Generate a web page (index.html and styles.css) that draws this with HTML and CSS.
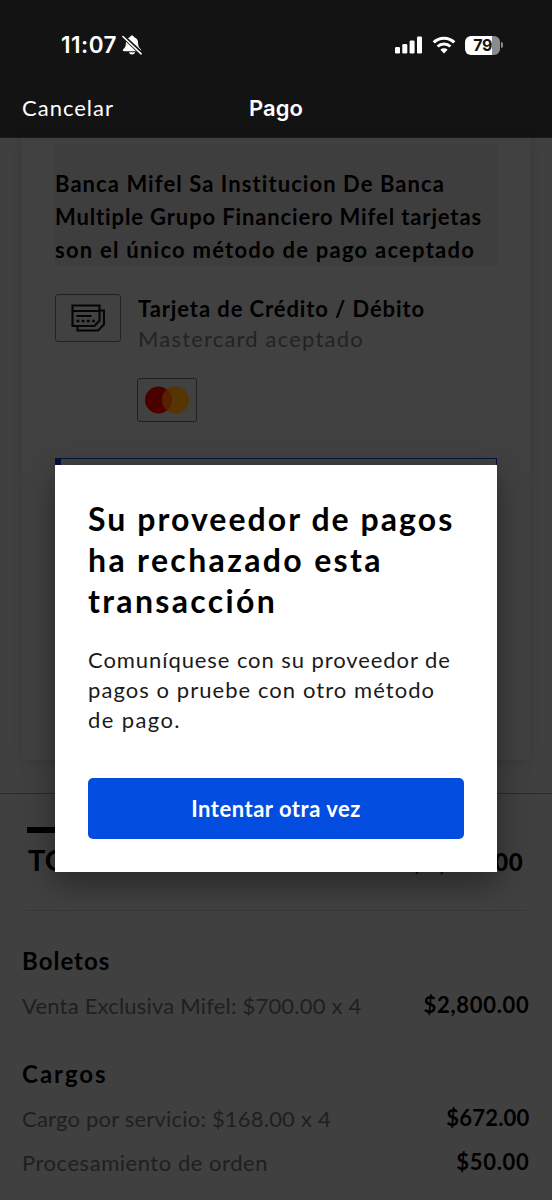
FILE: index.html
```
<!DOCTYPE html>
<html lang="es">
<head>
<meta charset="utf-8">
<title>Pago</title>
<link rel="stylesheet" href="styles.css">
</head>
<body>
<header class="top">
  <div class="status">
    <div class="clock">
      <span>11:07</span>
      <svg class="bell" width="20" height="20" viewBox="0 0 20 20">
        <path d="M10 .6c-.9 0-1.6.6-1.9 1.4C5.300 2.900 3.900 5.200 3.900 8c0 3.200-.7 4.500-2.200 5.800-.6.5-.9 1-.9 1.500 0 .6.500.9 1.100.9h16.200c.6 0 1.100-.3 1.100-.9 0-.5-.3-1-.9-1.500C16.800 12.500 16.100 11.200 16.100 8c0-2.800-1.400-5.100-4.200-6C11.600 1.200 10.900.6 10 .6zM7 17.300c.3 1.400 1.500 2.200 3 2.200s2.700-.8 3-2.200z" fill="#fff"/>
        <path d="M.4.700l19.800 18.600" stroke="#131313" stroke-width="4"/>
        <path d="M.9 1.500l18.200 17.300" stroke="#fff" stroke-width="1.600" stroke-linecap="round"/>
      </svg>
    </div>
    <div class="indicators">
      <svg width="28" height="18" viewBox="0 0 28 18" fill="#fff">
        <rect x="0" y="11" width="5" height="6.500" rx="1.300"/><rect x="7.300" y="8" width="5" height="9.500" rx="1.300"/><rect x="14.600" y="4.500" width="5" height="13" rx="1.300"/><rect x="22" y=".5" width="5" height="17" rx="1.300"/>
      </svg>
      <svg width="24" height="18" viewBox="0 0 24 18" fill="none" stroke="#fff" stroke-width="3">
        <path d="M1.700 6.400a14.700 14.700 0 0 1 20.600 0"/><path d="M5.600 10.500a9.200 9.200 0 0 1 12.800 0"/><path d="M12 17.400l-3.600-3.700a5.200 5.200 0 0 1 7.200 0z" fill="#fff" stroke="none"/>
      </svg>
      <div class="battery"><span>79</span></div>
      <i class="battery-tip"></i>
    </div>
  </div>
  <nav class="nav"><a class="cancel">Cancelar</a><h1>Pago</h1><span></span></nav>
</header>

<main class="page">
  <section class="panel">
    <div class="notice">
      <p class="n1">Banca Mifel Sa Institucion De Banca</p>
      <p class="n2">Multiple Grupo Financiero Mifel tarjetas</p>
      <p class="n3">son el único método de pago aceptado</p>
    </div>
    <div class="method">
      <div class="card-icon">
        <svg width="34" height="28" viewBox="0 0 34 28" fill="none" stroke="#050505" stroke-width="2.100">
          <path d="M1.500 1.500H28.500V16.500L23.500 22H1.500zM1.500 7H28.500M5.500 12H20.500"/>
          <path d="M28.500 6.500H33V20.500L27 26.500H6.500V22"/>
          <path d="M5.500 17H24" stroke-width="2.600" stroke-dasharray="2.800 2.400"/>
        </svg>
      </div>
      <div class="method-text">
        <h2>Tarjeta de Crédito / Débito</h2>
        <p>Mastercard aceptado</p>
        <div class="brand">
          <svg width="44" height="28" viewBox="0 0 44 28"><circle cx="13.500" cy="14" r="13.500" fill="#4b0000"/><circle cx="30.500" cy="14" r="13.500" fill="#573500"/><path d="M22 3.500a13.500 13.500 0 0 1 0 21a13.500 13.500 0 0 1 0-21z" fill="#582000"/></svg>
        </div>
      </div>
    </div>
    <div class="selected"></div>
  </section>

  <section class="summary">
    <div class="total-wrap">
      <div class="rule"></div>
      <div class="total"><span>TOTAL</span><b>$3,522.00</b></div>
    </div>
    <div class="group">
      <h3>Boletos</h3>
      <div class="row"><span class="r1">Venta Exclusiva Mifel: $700.00 x 4</span><b class="p1">$2,800.00</b></div>
    </div>
    <div class="group">
      <h3 class="charges">Cargos</h3>
      <div class="row"><span class="r2">Cargo por servicio: $168.00 x 4</span><b class="p2">$672.00</b></div>
      <div class="row"><span class="r3">Procesamiento de orden</span><b class="p1">$50.00</b></div>
    </div>
  </section>
</main>

<div class="modal" role="dialog">
  <h2><span class="t1">Su proveedor de pagos</span><br><span class="t2">ha rechazado esta</span><br><span class="t2">transacción</span></h2>
  <p><span class="m1">Comuníquese con su proveedor de</span><br><span class="m2">pagos o pruebe con otro método</span><br><span class="m3">de pago.</span></p>
  <button>Intentar otra vez</button>
</div>
</body>
</html>
```
FILE: styles.css
```
* { box-sizing: border-box; }
body, h1, h2, h3, p { margin: 0; }
body {
  position: relative;
  width: 552px;
  height: 1200px;
  overflow: hidden;
  background: #404040;
  color: #000;
  font: 22px/30px Lato, sans-serif;
  font-variant-ligatures: none;
}
svg { display: block; }

.top { height: 138px; background: #131313; color: #fff; border-bottom: 1px solid #1b1b1b; }
.status { display: flex; justify-content: space-between; align-items: center; height: 90px; padding: 0 49px 0 61px; }
.clock { display: flex; align-items: center; gap: 5px; font: 600 22.5px/30px Inter, sans-serif; letter-spacing: .5px; }
.indicators { display: flex; align-items: center; }
.indicators svg:first-child { margin-right: 9px; }
.battery {
  width: 35px; height: 19px; margin-left: 9px; border-radius: 6px;
  background: linear-gradient(90deg, #fff 27px, #8b8b8b 27px);
  color: #131313; font: 700 16px/19px Inter, sans-serif; text-align: center; letter-spacing: -.6px;
}
.battery-tip { width: 2px; height: 6px; margin-left: 1px; border-radius: 0 3px 3px 0; background: #8b8b8b; }
.nav { display: grid; grid-template-columns: 1fr auto 1fr; align-items: center; height: 36px; padding: 0 22px; }
.cancel { letter-spacing: 1px; }
.nav h1 { font: 600 22px/30px Inter, sans-serif; letter-spacing: .1px; }

.panel { height: 622px; margin: 0 22px; padding: 6px 33px 0; background: #414141; box-shadow: 0 0 12px rgba(0, 0, 0, .13); }
.notice { height: 122px; padding-top: 23px; background: #3e3e3e; font-weight: 700; line-height: 33px; white-space: nowrap; }
.n1 { letter-spacing: 1.07px; }
.n2 { letter-spacing: .87px; }
.n3 { letter-spacing: 1.24px; }
.method { display: flex; gap: 17px; padding-top: 28px; }
.card-icon { display: grid; place-items: center; width: 66px; height: 48px; border: 1.500px solid #222; border-radius: 3px; }
.method h2 { font-size: 22px; line-height: 30px; letter-spacing: .9px; }
.method p { color: #232323; letter-spacing: 1.19px; }
.brand { display: grid; place-items: center; width: 60px; height: 44px; margin-top: 24px; margin-left: -1px; border: 1px solid #202020; border-radius: 3px; }
.selected { width: 442px; height: 180px; margin-top: 36px; border: 1px solid #00133c; border-left: 6px solid #00123f; }

.summary { margin-top: 33px; padding: 0 22px; border-top: 1px solid #2b2b2b; }
.total-wrap { height: 117px; padding: 33px 7px 0 5px; border-bottom: 1px solid #383838; }
.rule { width: 76px; height: 6px; background: #000; }
.total { display: flex; justify-content: space-between; align-items: baseline; padding: 12px 0 0 1px; font-size: 29px; font-weight: 700; }
.total b { font-size: 24px; letter-spacing: .4px; }
.group { padding-top: 37px; margin-bottom: -4px; }
.group h3 { font-size: 24px; line-height: 26px; margin-bottom: 10px; letter-spacing: 1px; }
.group .charges { letter-spacing: 2px; }
.group + .group { margin-top: -1px; }
.row { display: flex; justify-content: space-between; height: 44px; line-height: 44px; color: #1f1f1f; white-space: nowrap; }
.row b { margin-right: .5px; color: #000; line-height: 42px; }
.r1 { letter-spacing: .2px; }
.r2 { letter-spacing: .2px; }
.r3 { letter-spacing: .53px; }
.p1 { letter-spacing: .7px; }
.p2 { letter-spacing: .2px; }

.modal { position: absolute; left: 55px; top: 465px; width: 442px; height: 407px; padding: 33px; background: #fff; box-shadow: 0 11px 30px rgba(0, 0, 0, .4); white-space: nowrap; }
.modal h2 { font-size: 32px; line-height: 41px; }
.t1 { letter-spacing: 2.05px; }
.t2 { letter-spacing: 2.35px; }
.modal p { margin-top: 24px; color: #1a1a1a; }
.m1 { letter-spacing: .92px; }
.m2 { letter-spacing: 1.06px; }
.m3 { letter-spacing: 1.4px; }
.modal button { display: block; width: 376px; height: 61px; margin-top: 43px; padding: 1px 0 0; border: 0; border-radius: 5px; background: #024ddf; color: #fff; font: 700 22px/60px Lato, sans-serif; letter-spacing: .51px; font-variant-ligatures: none; }
```
